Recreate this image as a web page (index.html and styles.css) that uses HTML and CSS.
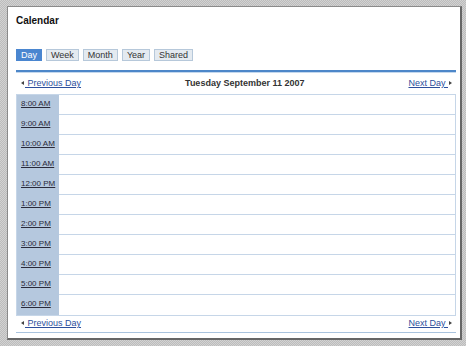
FILE: index.html
```html
<!DOCTYPE html>
<html>
<head>
    <title>Calendar</title>
    <link rel="stylesheet" href="styles.css">
</head>
<body>
    <div class="frame">
        <h1 class="title">Calendar</h1>

        <div class="tabs">
            <span class="tab active">Day</span>
            <span class="tab">Week</span>
            <span class="tab">Month</span>
            <span class="tab">Year</span>
            <span class="tab">Shared</span>
        </div>

        <div class="rule"></div>

        <div class="nav">
            <a class="prev" href="#"><span class="arrow-left"></span><u>&nbsp;Previous Day</u></a>
            <span class="date">Tuesday September 11 2007</span>
            <a class="next" href="#"><u>Next Day&nbsp;</u><span class="arrow-right"></span></a>
        </div>

        <div class="grid">
            <div class="row"><a class="time" href="#">8:00 AM</a><div class="slot"></div></div>
            <div class="row"><a class="time" href="#">9:00 AM</a><div class="slot"></div></div>
            <div class="row"><a class="time" href="#">10:00 AM</a><div class="slot"></div></div>
            <div class="row"><a class="time" href="#">11:00 AM</a><div class="slot"></div></div>
            <div class="row"><a class="time" href="#">12:00 PM</a><div class="slot"></div></div>
            <div class="row"><a class="time" href="#">1:00 PM</a><div class="slot"></div></div>
            <div class="row"><a class="time" href="#">2:00 PM</a><div class="slot"></div></div>
            <div class="row"><a class="time" href="#">3:00 PM</a><div class="slot"></div></div>
            <div class="row"><a class="time" href="#">4:00 PM</a><div class="slot"></div></div>
            <div class="row"><a class="time" href="#">5:00 PM</a><div class="slot"></div></div>
            <div class="row"><a class="time" href="#">6:00 PM</a><div class="slot"></div></div>
        </div>

        <div class="nav bottom">
            <a class="prev" href="#"><span class="arrow-left"></span><u>&nbsp;Previous Day</u></a>
            <a class="next" href="#"><u>Next Day&nbsp;</u><span class="arrow-right"></span></a>
        </div>
    </div>
</body>
</html>
```

FILE: styles.css
```css
html, body {
    margin: 0;
    height: 100%;
}

body {
    background: repeating-conic-gradient(#bcbcbc 0 25%, #d2d2d2 0 50%) 0 0 / 2px 2px;
    font-family: "Liberation Sans", Arial, sans-serif;
    overflow: hidden;
}

.frame {
    box-sizing: border-box;
    width: 455px;
    height: 334px;
    margin: 6px 0 0 7px;
    padding: 8px 4px 0 8px;
    background: #fff;
    border-left: 1px solid #8a8a8a;
    border-top: 1px solid #8a8a8a;
    border-right: 2px solid #666;
    border-bottom: 2px solid #666;
}

.title {
    margin: 0;
    font-size: 10px;
    line-height: 12px;
    font-weight: bold;
    color: #111;
}

.tabs {
    display: flex;
    gap: 4px;
    margin-top: 22px;
}

.tab {
    font-size: 9px;
    line-height: 10px;
    padding: 0 4px;
    color: #333;
    background: #e4eaf0;
    border: 1px solid #b6c8da;
}

.tab.active {
    color: #fff;
    background: #4a86d0;
    border-color: #4a86d0;
}

.rule {
    margin-top: 9px;
    height: 2px;
    background: #4d87c9;
    box-shadow: 0 1px 0 #c4d8ee;
}

.nav {
    display: flex;
    justify-content: space-between;
    align-items: center;
    margin-top: 5px;
    height: 12px;
    font-size: 9px;
    line-height: 12px;
}

.nav a {
    display: flex;
    align-items: center;
    color: #2d4f9c;
    text-decoration: none;
}

.nav .prev {
    padding-left: 5px;
}

.nav .next {
    padding-right: 4px;
}

.arrow-left {
    width: 0;
    height: 0;
    margin-right: 1px;
    border-top: 2.5px solid transparent;
    border-bottom: 2.5px solid transparent;
    border-right: 3px solid #444;
}

.arrow-right {
    width: 0;
    height: 0;
    margin-left: 1px;
    border-top: 2.5px solid transparent;
    border-bottom: 2.5px solid transparent;
    border-left: 3px solid #444;
}

.date {
    font-weight: bold;
    color: #333;
}

.grid {
    margin-top: 5px;
    border: 1px solid #c6d6e8;
}

.row {
    display: flex;
    height: 20px;
}

.time {
    box-sizing: border-box;
    width: 42px;
    padding: 3px 0 0 4px;
    background: #b5c8de;
    font-size: 8px;
    line-height: 11px;
    color: #2a2a3a;
}

.slot {
    flex: 1;
    border-bottom: 1px solid #c6d6e8;
}

.row:last-child .slot {
    border-bottom: none;
}

.nav.bottom {
    margin-top: 1px;
    padding-bottom: 3px;
    border-bottom: 1px solid #a9c3de;
}
```
